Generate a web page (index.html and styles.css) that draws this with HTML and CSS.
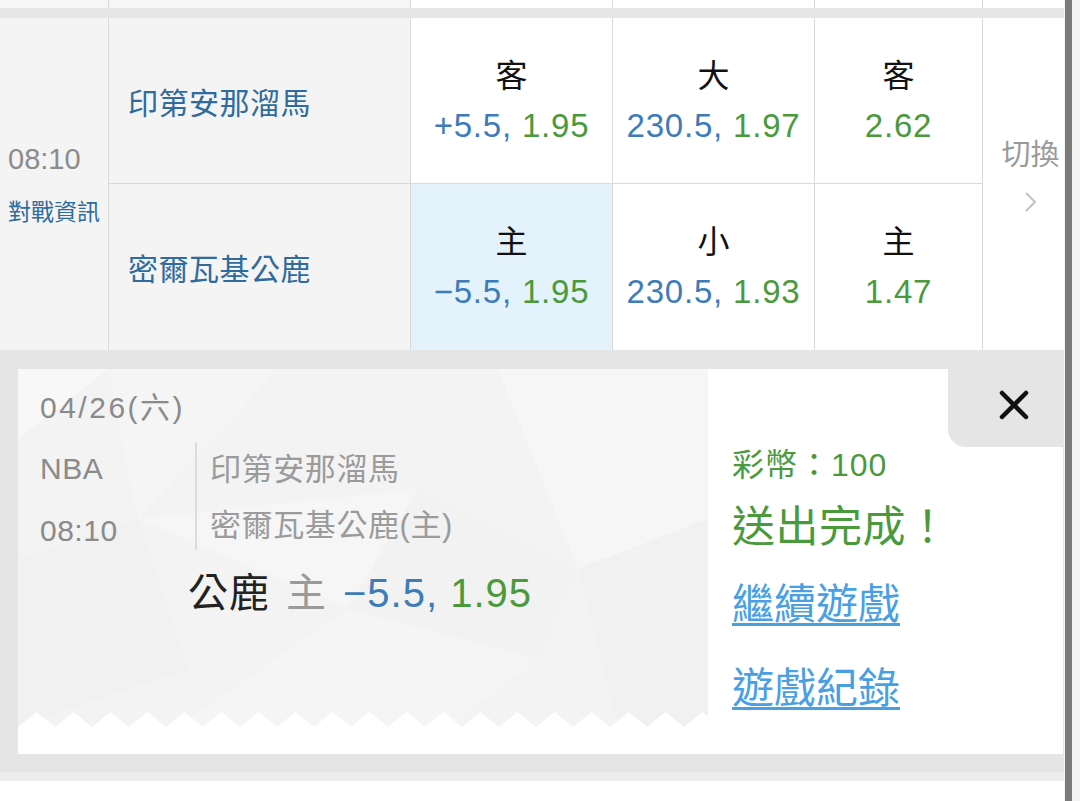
FILE: index.html
```html
<!DOCTYPE html>
<html lang="zh-Hant">
<head>
  <meta charset="UTF-8">
  <meta name="viewport" content="width=device-width, initial-scale=1">
  <title>投注完成</title>
  <link rel="stylesheet" href="styles.css">
</head>
<body>
  <div class="screen">
    <div class="page">
      <div class="row-prev">
        <div class="shade"></div>
        <div class="shade"></div>
        <div></div>
        <div></div>
        <div></div>
        <div class="last"></div>
      </div>
      <div class="gap"></div>

      <div class="match">
        <div class="time">
          <div class="clock">08:10</div>
          <div class="info">對戰資訊</div>
        </div>

        <div class="team">印第安那溜馬</div>
        <div class="odd">
          <div class="side">客</div>
          <div class="price"><span class="blue">+5.5,</span> <span class="green">1.95</span></div>
        </div>
        <div class="odd">
          <div class="side">大</div>
          <div class="price"><span class="blue">230.5,</span> <span class="green">1.97</span></div>
        </div>
        <div class="odd">
          <div class="side">客</div>
          <div class="price"><span class="green">2.62</span></div>
        </div>

        <div class="switch">
          <div class="switch-label">切換</div>
          <svg class="chevron" width="14" height="20" viewBox="0 0 14 20">
            <polyline points="2,1 11,10 2,19" fill="none" stroke="#c2c2c2" stroke-width="2"/>
          </svg>
        </div>

        <div class="team low">密爾瓦基公鹿</div>
        <div class="odd low picked">
          <div class="side">主</div>
          <div class="price"><span class="blue">−5.5,</span> <span class="green">1.95</span></div>
        </div>
        <div class="odd low">
          <div class="side">小</div>
          <div class="price"><span class="blue">230.5,</span> <span class="green">1.93</span></div>
        </div>
        <div class="odd low">
          <div class="side">主</div>
          <div class="price"><span class="green">1.47</span></div>
        </div>
      </div>

      <div class="drawer">
        <div class="panel">
          <div class="ticket">
            <svg class="ticket-bg" width="690" height="358" viewBox="0 0 690 358">
              <polygon points="0,0 90,0 0,70" fill="#f8f8f8"/>
              <polygon points="90,0 260,0 120,150" fill="#f5f5f5"/>
              <polygon points="0,190 120,150 170,300 0,358" fill="#f1f1f1"/>
              <polygon points="120,150 400,120 330,240" fill="#f6f6f6"/>
              <polygon points="330,240 520,290 430,358 160,358" fill="#f5f5f5"/>
              <polygon points="480,0 690,0 690,150 560,200" fill="#f6f6f6"/>
              <polygon points="560,200 690,150 690,358 600,358" fill="#f1f1f1"/>
              <polygon points="400,120 560,200 520,290 330,240" fill="#f2f2f2"/>
            </svg>

            <div class="ticket-body">
              <div class="date">04/26(六)</div>
              <div class="fixture">
                <div class="meta">
                  <div>NBA</div>
                  <div>08:10</div>
                </div>
                <div class="teams">
                  <div>印第安那溜馬</div>
                  <div>密爾瓦基公鹿(主)</div>
                </div>
              </div>
              <div class="pick">
                <span class="pick-team">公鹿</span><span class="pick-side">主</span><span class="blue">−5.5,</span> <span class="green">1.95</span>
              </div>
            </div>

            <svg class="zigzag" width="690" height="15" viewBox="0 0 690 15">
              <defs>
                <pattern id="teeth" width="37" height="15" patternUnits="userSpaceOnUse">
                  <polygon points="0,15 18.5,0 37,15" fill="#fff"/>
                </pattern>
              </defs>
              <rect width="690" height="15" fill="url(#teeth)"/>
            </svg>
          </div>

          <div class="result">
            <div class="close">
              <svg width="30" height="30" viewBox="0 0 30 30">
                <path d="M3 3 L27 27 M27 3 L3 27" stroke="#111" stroke-width="4.5" stroke-linecap="round"/>
              </svg>
            </div>
            <div class="coins">彩幣：100</div>
            <div class="done">送出完成！</div>
            <a class="link first" href="#">繼續遊戲</a>
            <a class="link" href="#">遊戲紀錄</a>
          </div>
        </div>
      </div>

      <div class="foot"></div>
    </div>

    <div class="scroll">
      <div class="thumb"></div>
    </div>
  </div>
</body>
</html>
```

FILE: styles.css
```css
* {
  box-sizing: border-box;
}

body {
  margin: 0;
  width: 1080px;
  height: 801px;
  overflow: hidden;
  background: #fff;
  font-family: "Liberation Sans", "Noto Sans CJK TC", sans-serif;
}

.screen {
  display: flex;
  height: 801px;
}

.page {
  width: 1064px;
  flex: none;
  display: flex;
  flex-direction: column;
}

/* scrollbar on the right edge */
.scroll {
  flex: 1;
  display: flex;
  background: #f3f3f3;
}

.scroll .thumb {
  width: 7px;
  margin-left: 1px;
  background: #7b7b7b;
}

/* bottom of the previous match row */
.row-prev {
  display: grid;
  grid-template-columns: 109px 302px 202px 202px 168px 1fr;
  height: 8px;
}

.row-prev div {
  background: #fff;
  border-right: 1px solid #dadada;
}

.row-prev .shade {
  background: #f6f6f6;
}

.row-prev .last {
  border-right: none;
}

.gap {
  height: 10px;
  background: #e6e6e6;
}

/* match table */
.match {
  display: grid;
  grid-template-columns: 109px 302px 202px 202px 168px 1fr;
  grid-template-rows: 166px 166px;
}

.time {
  grid-row: span 2;
  background: #f4f4f4;
  border-right: 1px solid #dadada;
  display: flex;
  flex-direction: column;
  justify-content: center;
  gap: 20px;
  padding-left: 8px;
}

.time .clock {
  font-size: 29px;
  line-height: 36px;
  color: #8c8c8c;
}

.time .info {
  font-size: 23px;
  line-height: 30px;
  color: #2f6b9c;
}

.team {
  background: #f4f4f4;
  border-right: 1px solid #dadada;
  border-bottom: 1px solid #dadada;
  display: flex;
  align-items: center;
  padding-left: 19px;
  font-size: 30px;
  letter-spacing: 0.5px;
  color: #2f6b9c;
}

.odd {
  background: #fff;
  border-right: 1px solid #dadada;
  border-bottom: 1px solid #dadada;
  display: flex;
  flex-direction: column;
  justify-content: center;
  align-items: center;
  gap: 10px;
}

.low {
  border-bottom: none;
}

.odd.picked {
  background: #e4f2fc;
}

.odd .side {
  font-size: 32px;
  line-height: 40px;
  color: #111;
}

.odd .price {
  font-size: 33px;
  line-height: 40px;
  letter-spacing: 0.8px;
}

.blue {
  color: #3d7cb8;
}

.green {
  color: #4a9a3c;
}

.switch {
  grid-column: 6;
  grid-row: 1 / span 2;
  background: #fff;
  display: flex;
  flex-direction: column;
  align-items: center;
  gap: 17px;
  padding: 117px 0 0 14px;
}

.switch-label {
  font-size: 29px;
  line-height: 40px;
  color: #9a9a9a;
}

/* confirmation drawer */
.drawer {
  background: #e5e5e5;
  padding: 19px 1px 18px 18px;
}

.panel {
  display: flex;
  height: 385px;
  background: #fff;
}

.ticket {
  position: relative;
  width: 690px;
  height: 358px;
  flex: none;
  background: #f3f3f3;
  border-bottom-right-radius: 10px;
  overflow: hidden;
}

.ticket-bg {
  position: absolute;
  top: 0;
  left: 0;
}

.zigzag {
  position: absolute;
  left: 0;
  bottom: 0;
}

.ticket-body {
  position: relative;
  padding: 19px 0 0 22px;
  color: #8a8a8a;
}

.date {
  font-size: 30px;
  line-height: 40px;
  letter-spacing: 2.5px;
}

.fixture {
  display: flex;
  margin-top: 10px;
}

.fixture .meta {
  width: 155px;
  font-size: 30px;
  line-height: 62px;
  letter-spacing: 0.5px;
}

.fixture .teams {
  margin-top: 4px;
  height: 108px;
  border-left: 2px solid #dcdcdc;
  padding-left: 13px;
  font-size: 31px;
  line-height: 56px;
  letter-spacing: 0.6px;
  color: #9b9b9b;
}

.pick {
  margin: 6px 0 0 148px;
  font-size: 40px;
  line-height: 50px;
  letter-spacing: 1px;
}

.pick-team {
  color: #222;
  margin-right: 16px;
}

.pick-side {
  color: #9a9a9a;
  margin-right: 16px;
}

.result {
  position: relative;
  flex: 1;
  padding: 74px 0 0 24px;
}

.close {
  position: absolute;
  top: 0;
  right: 0;
  width: 115px;
  height: 78px;
  background: #e5e5e5;
  border-bottom-left-radius: 18px;
  padding: 21px 0 0 51px;
}

.close svg {
  display: block;
}

.coins {
  font-size: 32px;
  line-height: 44px;
  letter-spacing: 1px;
  color: #4a9a3c;
}

.done {
  margin-top: 12px;
  font-size: 43px;
  line-height: 56px;
  letter-spacing: 0.5px;
  color: #4a9a3c;
}

.link {
  display: block;
  margin-top: 22px;
  font-size: 42px;
  line-height: 56px;
  color: #4a9fe3;
  text-decoration: underline;
  text-decoration-thickness: 3px;
  text-underline-offset: 4px;
}

.link.first {
  margin-top: 22px;
}

.link + .link {
  margin-top: 28px;
}

.foot {
  flex: 1;
  border-top: 9px solid #ececec;
  background: #fff;
}
```
